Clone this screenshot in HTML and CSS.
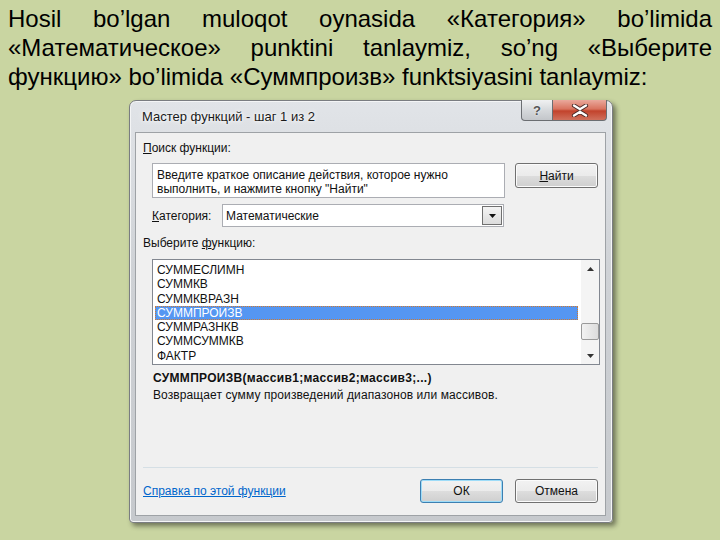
FILE: index.html
```html
<!DOCTYPE html>
<html lang="ru">
<head>
<meta charset="utf-8">
<title>Мастер функций</title>
<link rel="stylesheet" href="styles.css">
</head>
<body>
<div class="page">
  <p class="intro">Hosil bo’lgan muloqot oynasida «Категория» bo’limida «Математическое» punktini tanlaymiz, so’ng «Выберите функцию» bo’limida «Суммпроизв» funktsiyasini tanlaymiz:</p>
  <div class="dialog">
    <div class="titlebar">
      <span class="title">Мастер функций - шаг 1 из 2</span>
      <div class="tb-btns">
        <span class="tb-help">?</span>
        <span class="tb-close"><svg width="18" height="13" viewBox="0 0 18 13"><path d="M3 1.5 L9 5.2 L15 1.5 M3 11.5 L9 7.8 L15 11.5" stroke="#4a2a28" stroke-width="4.2" fill="none" stroke-linecap="round"/><path d="M3 1.5 L9 5.2 L15 1.5 M3 11.5 L9 7.8 L15 11.5" stroke="#ffffff" stroke-width="2.4" fill="none" stroke-linecap="round"/></svg></span>
      </div>
    </div>
    <div class="client">
      <div class="lbl"><u>П</u>оиск функции:</div>
      <div class="search-row">
        <div class="searchbox">Введите краткое описание действия, которое нужно<br>выполнить, и нажмите кнопку "Найти"</div>
        <span class="btn btn-find"><u>Н</u>айти</span>
      </div>
      <div class="cat-row">
        <span class="cat-lbl"><u>К</u>атегория:</span>
        <div class="select">
          <span class="select-val">Математические</span>
          <span class="select-arrow"><svg width="7" height="4" viewBox="0 0 7 4"><path d="M0 0 H7 L3.5 4 Z" fill="#111"/></svg></span>
        </div>
      </div>
      <div class="lbl lbl2">Выберите <u>ф</u>ункцию:</div>
      <div class="list">
        <div class="items">
          <div class="item">СУММЕСЛИМН</div>
          <div class="item">СУММКВ</div>
          <div class="item">СУММКВРАЗН</div>
          <div class="item sel">СУММПРОИЗВ</div>
          <div class="item">СУММРАЗНКВ</div>
          <div class="item">СУММСУММКВ</div>
          <div class="item">ФАКТР</div>
        </div>
        <div class="scroll">
          <span class="sb-arrow"><svg width="7" height="4" viewBox="0 0 7 4"><path d="M0 4 H7 L3.5 0 Z" fill="#333"/></svg></span>
          <div class="sb-track"><div class="sb-thumb" style="margin-top:46px"></div></div>
          <span class="sb-arrow"><svg width="7" height="4" viewBox="0 0 7 4"><path d="M0 0 H7 L3.5 4 Z" fill="#333"/></svg></span>
        </div>
      </div>
      <div class="sig">СУММПРОИЗВ(массив1;массив2;массив3;...)</div>
      <div class="desc">Возвращает сумму произведений диапазонов или массивов.</div>
      <div class="sep"></div>
      <div class="footer">
        <span class="link">Справка по этой функции</span>
        <span class="btn btn-ok">ОК</span>
        <span class="btn">Отмена</span>
      </div>
    </div>
  </div>
</div>
</body>
</html>
```
FILE: styles.css
```css
html, body {
  margin: 0;
  padding: 0;
  background: #c9d5a1;
}
.page {
  width: 720px;
  height: 540px;
  overflow: hidden;
}
.intro {
  margin: 0;
  padding: 4px 8px 0 8px;
  font-family: "Liberation Sans", Arial, sans-serif;
  font-size: 24px;
  line-height: 29px;
  color: #000;
  text-align: justify;
  text-align-last: left;
}
.dialog {
  margin: 9px 0 0 129px;
  width: 484px;
  height: 423px;
  box-sizing: border-box;
  border: 1px solid #7a7d81;
  border-radius: 7px 7px 4px 4px;
  background: linear-gradient(#e1e4e8, #cfd2d6 40%, #c6c9cd);
  box-shadow: 3px 3px 5px rgba(0,0,0,0.45), inset 0 0 0 1px #f4f5f6;
  padding: 0 6px 6px 5px;
  display: flex;
  flex-direction: column;
  font-family: "Liberation Sans", Arial, sans-serif;
  font-size: 12px;
  color: #111;
}
.titlebar {
  height: 31px;
  display: flex;
  justify-content: space-between;
  align-items: flex-start;
}
.title {
  padding-left: 7px;
  line-height: 31px;
  font-size: 13px;
  color: #1a1a1a;
  text-shadow: 0 0 6px #fff, 0 0 3px #fff;
}
.tb-btns {
  display: flex;
  margin-top: -1px;
  margin-right: -1px;
}
.tb-help, .tb-close {
  height: 21px;
  box-sizing: border-box;
  display: flex;
  align-items: center;
  justify-content: center;
  border: 1px solid #6b6e72;
  border-top: none;
}
.tb-help {
  width: 32px;
  border-radius: 0 0 0 4px;
  background: linear-gradient(#f0f1f2, #d6d9dc 50%, #c3c6ca);
  color: #555;
  font-weight: bold;
  font-size: 13px;
  text-shadow: 0 0 2px #fff;
}
.tb-close {
  width: 54px;
  border-left: none;
  border-radius: 0 0 4px 0;
  background: linear-gradient(#eaa99c, #d9735f 45%, #c2432c 55%, #d0705c);
}
.client {
  flex: 1;
  background: #f0f0f0;
  border: 1px solid #9ea2a6;
  padding: 8px 7px 0 7px;
  display: flex;
  flex-direction: column;
}
.lbl {
  line-height: 14px;
  height: 14px;
}
.search-row {
  margin-top: 8px;
  padding-left: 9px;
  display: flex;
  align-items: flex-start;
}
.searchbox {
  width: 353px;
  height: 35px;
  box-sizing: border-box;
  background: #fff;
  border: 1px solid #abadb3;
  padding: 4px 0 0 4px;
  line-height: 14px;
}
.btn {
  width: 83px;
  height: 24px;
  box-sizing: border-box;
  border: 1px solid #707070;
  border-radius: 3px;
  background: linear-gradient(#f2f2f2, #ebebeb 50%, #dddddd 51%, #cfcfcf);
  display: flex;
  align-items: center;
  justify-content: center;
  box-shadow: inset 0 0 0 1px #fbfbfb;
}
.btn-find {
  margin-left: auto;
  height: 25px;
}
.cat-row {
  margin-top: 6px;
  padding-left: 9px;
  display: flex;
  align-items: center;
}
.cat-lbl {
  width: 70px;
}
.select {
  width: 282px;
  height: 23px;
  box-sizing: border-box;
  background: #fff;
  border: 1px solid #abadb3;
  display: flex;
  align-items: stretch;
}
.select-val {
  flex: 1;
  padding-left: 3px;
  display: flex;
  align-items: center;
}
.select-arrow {
  width: 18px;
  border: 1px solid #707070;
  margin: 1px;
  background: linear-gradient(#f4f4f4, #dcdcdc);
  display: flex;
  align-items: center;
  justify-content: center;
}
.lbl2 {
  margin-top: 9px;
}
.list {
  margin-top: 9px;
  margin-left: 9px;
  width: 448px;
  height: 106px;
  box-sizing: border-box;
  border: 1px solid #828790;
  background: #fff;
  display: flex;
}
.items {
  flex: 1;
  padding: 3px 3px 0 2px;
}
.item {
  height: 14.3px;
  line-height: 14.3px;
  padding-left: 2px;
}
.item.sel {
  background: #5596f2;
  color: #fff;
  outline: 1px dotted #d07a30;
  outline-offset: -1px;
}
.scroll {
  width: 18px;
  background: #f4f4f4;
  display: flex;
  flex-direction: column;
}
.sb-arrow {
  height: 17px;
  display: flex;
  align-items: center;
  justify-content: center;
}
.sb-track {
  flex: 1;
}
.sb-thumb {
  height: 17px;
  box-sizing: border-box;
  border: 1px solid #9a9a9a;
  border-radius: 2px;
  background: linear-gradient(90deg, #f2f2f2, #dcdcdc);
}
.sig {
  margin-top: 6px;
  padding-left: 10px;
  line-height: 14px;
  font-weight: bold;
  letter-spacing: 0.3px;
}
.desc {
  margin-top: 3px;
  padding-left: 10px;
  line-height: 14px;
  letter-spacing: 0.1px;
}
.sep {
  margin-top: 65px;
  height: 1px;
  background: #d5dfe5;
}
.footer {
  margin-top: 11px;
  display: flex;
  align-items: center;
  gap: 12px;
}
.link {
  color: #0066cc;
  text-decoration: underline;
  margin-right: auto;
}
.btn-ok {
  border-color: #3c7fb1;
  box-shadow: inset 0 0 0 1px #9edcf8;
}
```
